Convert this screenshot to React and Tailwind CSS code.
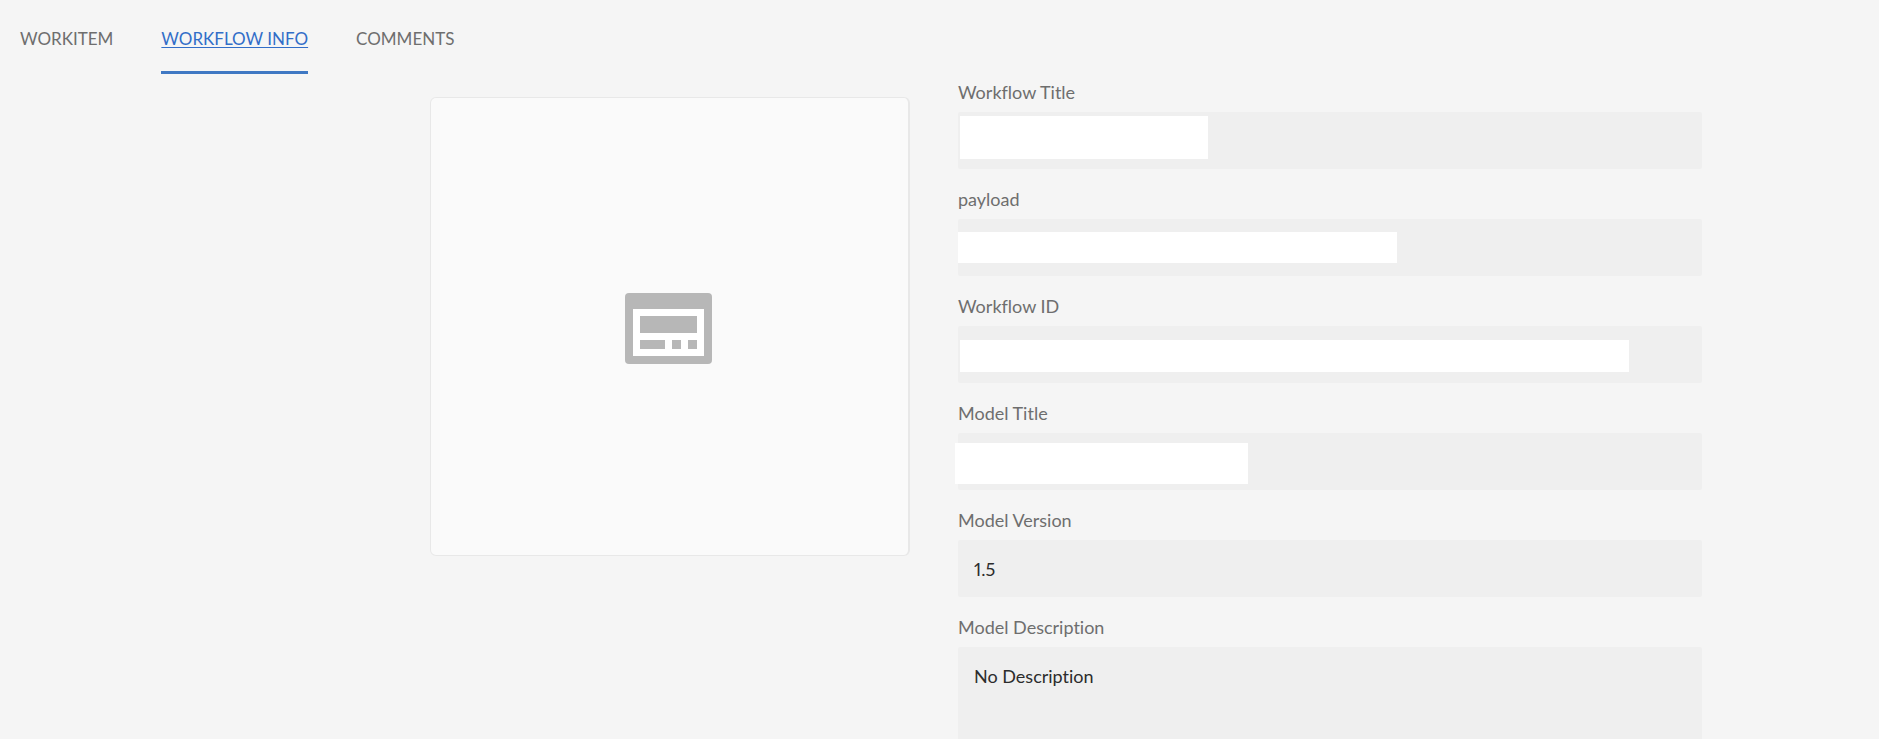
const tabs = [
  { label: 'WORKITEM', href: '#workitem' },
  { label: 'WORKFLOW INFO', href: '#workflow-info', active: true },
  { label: 'COMMENTS', href: '#comments' },
]

// mask: white block that hides a private value
const fields = [
  { id: 'workflow-title', label: 'Workflow Title', mask: 'left-[2px] top-1 w-[248px] h-[43px]' },
  { id: 'payload', label: 'payload', mask: 'left-0 top-[13px] w-[439px] h-[31px]' },
  { id: 'workflow-id', label: 'Workflow ID', mask: 'left-[2px] top-[14px] w-[669px] h-8' },
  { id: 'model-title', label: 'Model Title', mask: '-left-[3px] top-[10px] w-[293px] h-[41px]' },
  { id: 'model-version', label: 'Model Version', value: '1.5' },
]

const TabBar = () => (
  <nav className="flex gap-12 pl-5 text-[17px] leading-6">
    {tabs.map((tab) => (
      <a
        key={tab.label}
        href={tab.href}
        className={
          tab.active
            ? 'pt-[27px] pb-5 border-b-3 border-[#3f78c3] text-[#326ec8] underline underline-offset-2'
            : 'pt-[27px] pb-5 border-b-3 border-transparent text-[#6e6e6e]'
        }
      >
        {tab.label}
      </a>
    ))}
  </nav>
)

const WorkflowIcon = () => (
  <svg width="87" height="71" viewBox="0 0 87 71" aria-hidden="true">
    <rect width="87" height="71" rx="4" fill="#b7b7b7" />
    <rect x="8" y="16" width="71" height="47" fill="#fff" />
    <g fill="#b7b7b7">
      <rect x="15" y="23" width="57" height="17" />
      <rect x="15" y="47" width="25" height="9" />
      <rect x="47" y="47" width="9" height="9" />
      <rect x="63" y="47" width="9" height="9" />
    </g>
  </svg>
)

const Field = ({ id, label, value = '', mask }) => (
  <div className="mb-[18px]">
    <label htmlFor={id} className="block mb-2 text-[#6e6e6e]">
      {label}
    </label>
    <div className="relative">
      <input
        id={id}
        type="text"
        readOnly
        defaultValue={value}
        className="block w-full h-[57px] px-4 rounded-xs bg-[#efefef] text-[#2c2c2c] proportional-nums outline-none"
      />
      {mask && <span className={`absolute bg-white max-w-full ${mask}`} />}
    </div>
  </div>
)

const App = () => {
  return (
    <div className="min-h-screen flex flex-col bg-[#f5f5f5] font-[Lato,sans-serif] [font-variant-ligatures:none]">
      <TabBar />

      <main className="flex-1 grid grid-cols-[430fr_480fr_48fr_744fr_177fr] pt-[6px] text-[18px] leading-6">
        {/* Thumbnail */}
        <div className="col-start-2 self-start mt-[17px] h-[459px] pt-1 pr-[2px] flex items-center justify-center rounded-md border border-r-2 border-[#e8e8e8] bg-[#fafafa]">
          <WorkflowIcon />
        </div>

        {/* Details */}
        <form className="col-start-4 flex flex-col">
          {fields.map((field) => (
            <Field key={field.id} {...field} />
          ))}
          <label htmlFor="model-description" className="block mb-2 text-[#6e6e6e]">
            Model Description
          </label>
          <textarea
            id="model-description"
            readOnly
            defaultValue="No Description"
            className="flex-1 w-full px-4 py-[17px] rounded-t-xs bg-[#efefef] text-[#2c2c2c] outline-none resize-none"
          />
        </form>
      </main>
    </div>
  )
}

export default App
